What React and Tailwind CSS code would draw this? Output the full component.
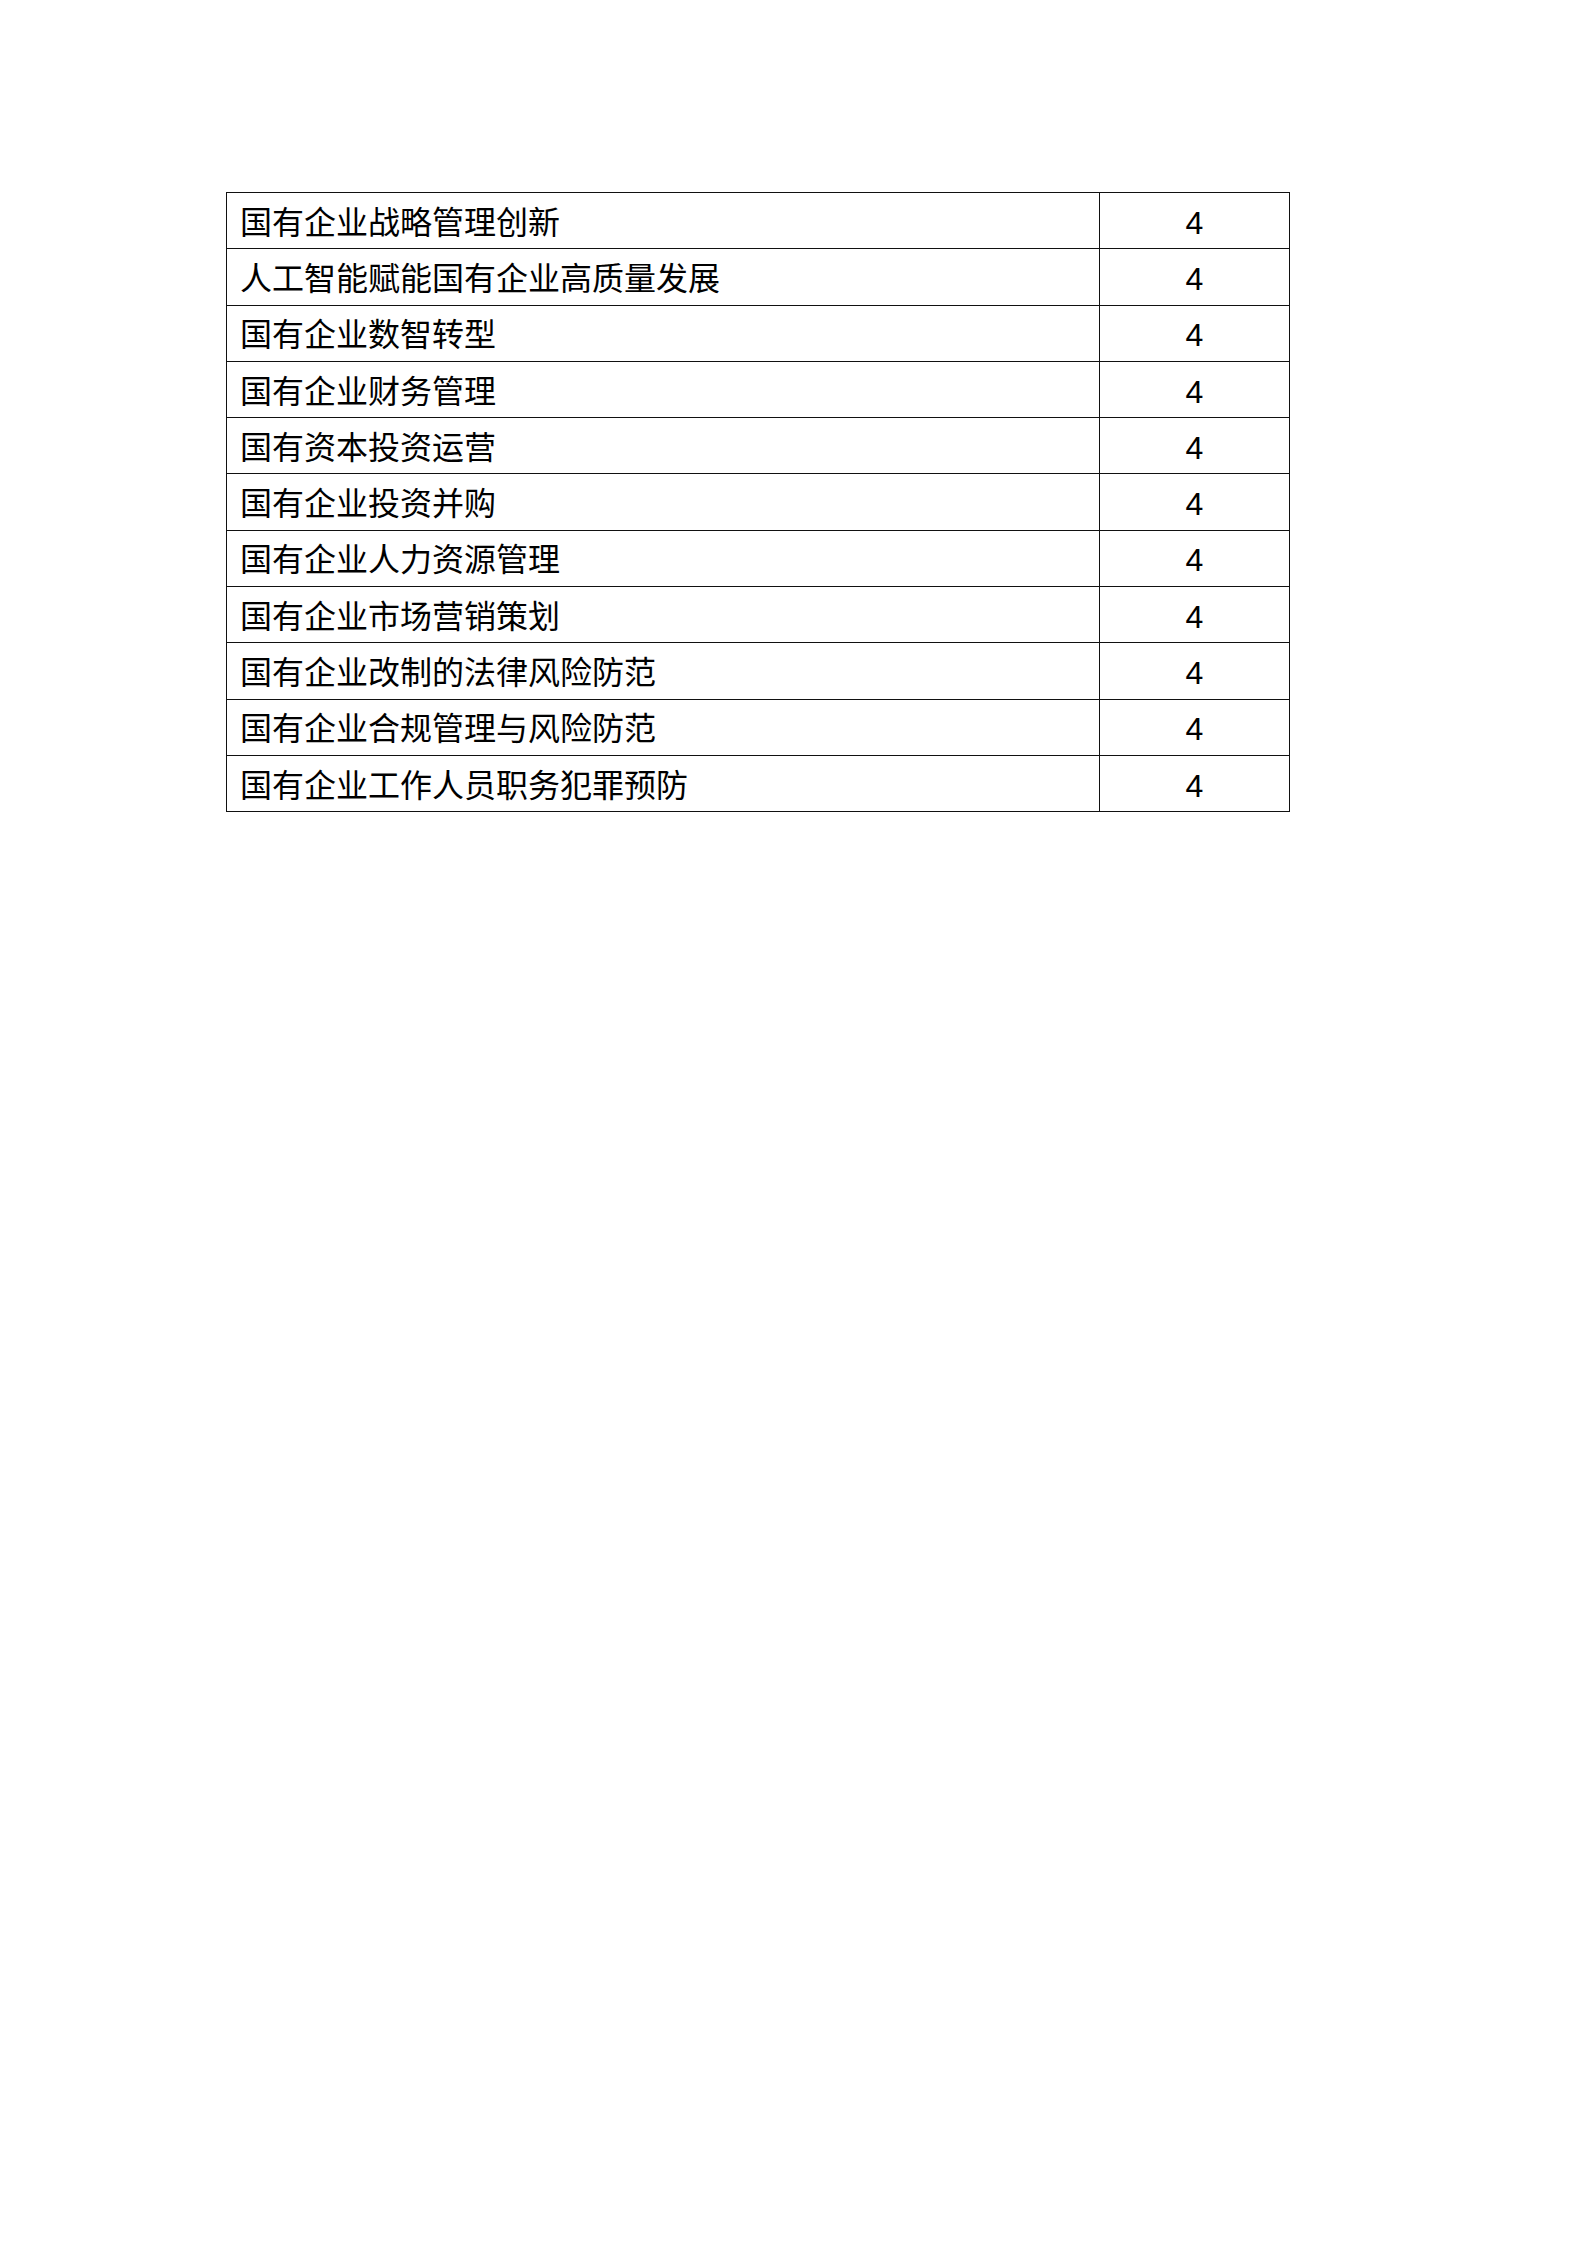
import React from "react";

const courses = [
  "国有企业战略管理创新",
  "人工智能赋能国有企业高质量发展",
  "国有企业数智转型",
  "国有企业财务管理",
  "国有资本投资运营",
  "国有企业投资并购",
  "国有企业人力资源管理",
  "国有企业市场营销策划",
  "国有企业改制的法律风险防范",
  "国有企业合规管理与风险防范",
  "国有企业工作人员职务犯罪预防",
];

const App = () => {
  return (
    <div
      className="min-h-screen bg-white pt-[192px] pl-[226px]"
      style={{ fontFamily: '"Liberation Sans", "Noto Sans CJK SC", sans-serif' }}
    >
      <table className="w-[1064px] border-collapse border border-[#111] text-[32px] text-black">
        <tbody>
          {courses.map((name, index) => (
            <tr key={index} className="h-[56.3px]">
              <td className="border border-[#111] pl-[13px] pt-[4px] leading-none w-[873px]">
                {name}
              </td>
              <td className="border border-[#111] pt-[4px] text-center leading-none">4</td>
            </tr>
          ))}
        </tbody>
      </table>
    </div>
  );
};

export default App;
